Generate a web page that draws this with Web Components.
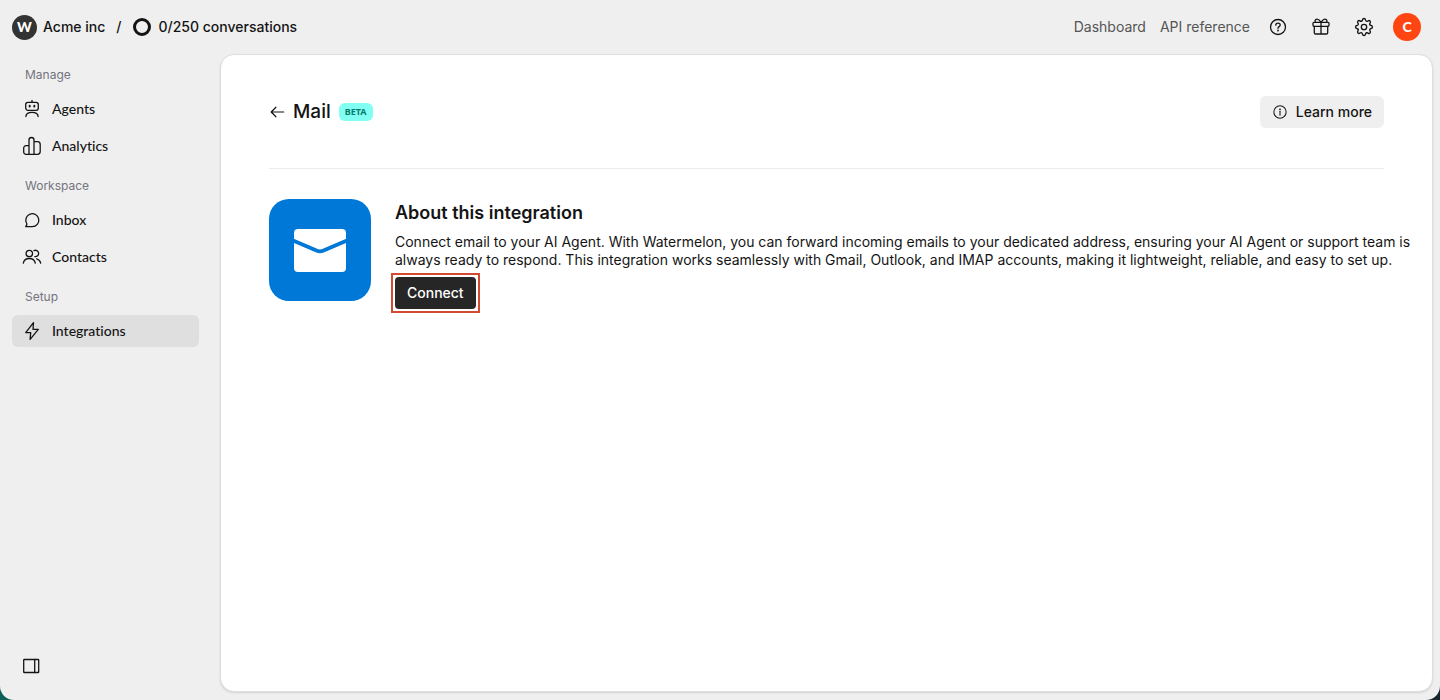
<!DOCTYPE html>
<html lang="en">
<head>
<meta charset="utf-8">
<meta name="viewport" content="width=device-width, initial-scale=1">
<title>Mail</title>
<style>
    html, body{
        margin: 0;
        min-height: 100%;
    }
    body{
        background: linear-gradient(90deg, #0a6156 0%, #16262c 100%);
        color: #141414;
        font: 500 14px/18px Inter, "Liberation Sans", sans-serif;
    }
</style>
</head>
<body>
<app-shell>
    <top-bar slot="header" workspace="Acme inc" usage="0/250 conversations"></top-bar>
    <side-nav slot="sidebar">
        <nav-group label="Manage">
            <nav-item icon="agent">Agents</nav-item>
            <nav-item icon="chart">Analytics</nav-item>
        </nav-group>
        <nav-group label="Workspace">
            <nav-item icon="chat">Inbox</nav-item>
            <nav-item icon="people">Contacts</nav-item>
        </nav-group>
        <nav-group label="Setup">
            <nav-item icon="bolt" active>Integrations</nav-item>
        </nav-group>
    </side-nav>
    <page-header>
        Mail
        <span slot="badge">BETA</span>
        <span slot="action">Learn more</span>
    </page-header>
    <integration-info>
        <span slot="title">About this integration</span>
        Connect email to your AI Agent. With Watermelon, you can forward incoming emails to your dedicated address, ensuring your AI Agent or support team is always ready to respond. This integration works seamlessly with Gmail, Outlook, and IMAP accounts, making it lightweight, reliable, and easy to set up.
        <span slot="action">Connect</span>
    </integration-info>
</app-shell>

<script>
// a quarter of the gear outline, repeated four times around the centre
const gearQuarter = "M-2.4-5.8Q-1.6-6.2-1.5-7.1-1.3-8.5 0-8.5 1.3-8.5 1.5-7.1 1.6-6.2 2.4-5.8 3.2-5.5 4-6.1 5.1-6.9 6-6 6.9-5.1 6.1-4 5.500-3.200 5.800-2.400";

const icons = {
  agent: `<rect x="3.7" y="3.3" width="12.6" height="8" rx="2.2"/><path d="M10 1.4v1.900M3.900 17.600c0-2.600 2.400-4.300 6.100-4.300s6.100 1.700 6.100 4.300"/><path d="M7.700 6.800v.6M12.300 6.800v.6" stroke-width="2"/>`,
  chart: `<path d="M7 18.300H4A2.300 2.300 0 0 1 1.700 16v-4A2.300 2.300 0 0 1 4 9.700h3M7 18.300V4a2.500 2.500 0 0 1 5 0v14.300zM12 5.700h3.500A2.700 2.700 0 0 1 18.200 8.400V15.600a2.700 2.700 0 0 1-2.700 2.700H12"/>`,
  chat: `<path d="M3.700 16.700h6.600a6.500 6.500 0 1 0-5.600-3.200c.3.600.2 1.100-.1 1.700z"/>`,
  people: `<circle cx="7.300" cy="6.500" r="3.200"/><path d="M1.300 16.200c.6-3 3-4.700 6-4.700s5.400 1.700 6 4.700M12 3.600a3.200 3.200 0 1 1 .8 6M14.600 11.800c2.100.5 3.600 2 4.100 4.400"/>`,
  bolt: `<path d="M11.500 1.700 3.700 11.600h5L8.100 18.300l8.200-10h-5.300z"/>`,
  help: `<circle cx="10" cy="10" r="7.500"/><path d="M7.800 8.200c0-1.300 1-2.100 2.200-2.100s2.200.8 2.200 2c0 1.500-2.200 1.600-2.200 3.200"/><circle cx="10" cy="13.500" r=".9" fill="currentColor" stroke="none"/>`,
  gift: `<rect x="2" y="5.300" width="16" height="4" rx="1"/><path d="M3.300 9.300v6.400a1.300 1.300 0 0 0 1.300 1.300h10.800a1.300 1.300 0 0 0 1.300-1.300V9.300M10 5.300V17M10 5.300C8.900 3.400 7.600 2 6 2.100 4 2.200 3.600 4 4.600 5.300M10 5.300c1.100-1.900 2.400-3.300 4-3.200 2 .1 2.400 1.900 1.400 3.200"/>`,
  gear: `<circle cx="10" cy="10" r="2.700"/>` + [0, 90, 180, 270].map((angle) => `<path d="${gearQuarter}" transform="translate(10 10) rotate(${angle})"/>`).join(""),
  back: `<path d="M2.400 10h14M7.700 4.700 2.400 10l5.300 5.300"/>`,
  info: `<circle cx="10" cy="10" r="7.700"/><path d="M10 9v5"/><circle cx="10" cy="6.600" r="1.100" fill="currentColor" stroke="none"/>`,
  panel: `<rect x="1.700" y="3.500" width="15" height="13" rx=".6"/><path d="M12.700 3.500v13"/>`,
};

class Icon extends HTMLElement {
  constructor() {
    super();
    const shadow = this.attachShadow({ mode: "open" });
    shadow.innerHTML = `
      <style>
        :host{
            display: inline-block;
            flex: none;
            width: 20px;
            height: 20px;
        }
        svg{
            display: block;
            width: 100%;
            height: 100%;
        }
      </style>
      <svg viewBox="0 0 20 20" fill="none" stroke="currentColor" stroke-width="1.3" stroke-linecap="round" stroke-linejoin="round" aria-hidden="true">${icons[this.getAttribute("name")]}</svg>
    `;
  }
}

class AppShell extends HTMLElement {
  constructor() {
    super();
    const shadow = this.attachShadow({ mode: "open" });
    shadow.innerHTML = `
      <style>
        :host{
            display: grid;
            grid-template: 54px 1fr / 220px minmax(0, 1fr);
            box-sizing: border-box;
            min-height: 100vh;
            padding: 0 7px 8px 0;
            background: #efefef;
            border-radius: 0 0 14px 14px;
        }
        .header{
            grid-column: 1 / -1;
        }
        .sidebar{
            display: grid;
        }
        main{
            padding: 41px 48px;
            background: #fff;
            border: 1px solid #dedede;
            border-radius: 14px;
            box-shadow: 0 1px 2px rgba(0, 0, 0, 0.12);
        }
      </style>
      <div class="header"><slot name="header"></slot></div>
      <div class="sidebar"><slot name="sidebar"></slot></div>
      <main><slot></slot></main>
    `;
  }
}

class TopBar extends HTMLElement {
  constructor() {
    super();
    const shadow = this.attachShadow({ mode: "open" });
    shadow.innerHTML = `
      <style>
        :host{
            display: flex;
            align-items: center;
            justify-content: space-between;
            height: 54px;
            padding: 0 12px;
        }
        div, nav{
            display: flex;
            align-items: center;
        }
        .logo{
            display: flex;
            align-items: center;
            justify-content: center;
            width: 25px;
            height: 25px;
            margin-right: 6px;
            border-radius: 50%;
            background: #333;
            color: #fff;
            font-family: Lato, sans-serif;
            font-weight: 900;
        }
        .slash{
            margin: 0 11px;
        }
        .ring{
            box-sizing: border-box;
            width: 18px;
            height: 18px;
            margin-right: 8px;
            border: 3px solid #141414;
            border-radius: 50%;
        }
        nav{
            gap: 14px;
        }
        a{
            color: #555;
            font-weight: 400;
            text-decoration: none;
        }
        .tools{
            gap: 23px;
            margin-left: 4px;
        }
        button{
            display: flex;
            padding: 0;
            border: 0;
            background: none;
            color: inherit;
            font: inherit;
            cursor: pointer;
        }
        .avatar{
            align-items: center;
            justify-content: center;
            width: 28px;
            height: 28px;
            margin-left: -4px;
            border-radius: 50%;
            background: #ff4612;
            color: #fff;
            font-family: Lato, sans-serif;
            font-weight: 900;
        }
      </style>
      <div>
        <span class="logo">W</span>
        <span class="workspace"></span>
        <span class="slash">/</span>
        <span class="ring"></span>
        <span class="usage"></span>
      </div>
      <nav>
        <a href="#dashboard">Dashboard</a>
        <a href="#api">API reference</a>
        <div class="tools">
          <button aria-label="Help"><c-icon name="help"></c-icon></button>
          <button aria-label="News"><c-icon name="gift"></c-icon></button>
          <button aria-label="Settings"><c-icon name="gear"></c-icon></button>
          <button class="avatar">C</button>
        </div>
      </nav>
    `;
    shadow.querySelector(".workspace").textContent = this.getAttribute("workspace");
    shadow.querySelector(".usage").textContent = this.getAttribute("usage");
  }
}

class SideNav extends HTMLElement {
  constructor() {
    super();
    const shadow = this.attachShadow({ mode: "open" });
    shadow.innerHTML = `
      <style>
        :host{
            display: flex;
            flex-direction: column;
            justify-content: space-between;
            padding: 5px 21px 16px 12px;
        }
        nav{
            display: grid;
            gap: 8px;
        }
        button{
            display: flex;
            align-self: start;
            padding: 0;
            margin-left: 10px;
            border: 0;
            background: none;
            color: inherit;
        }
      </style>
      <nav><slot></slot></nav>
      <button aria-label="Toggle sidebar"><c-icon name="panel"></c-icon></button>
    `;
  }
}

class NavGroup extends HTMLElement {
  constructor() {
    super();
    const shadow = this.attachShadow({ mode: "open" });
    shadow.innerHTML = `
      <style>
        :host{
            display: block;
        }
        .label{
            padding: 0 0 2px 13px;
            color: #747480;
            font-size: 12px;
            font-weight: 400;
            line-height: 32px;
        }
        .items{
            display: grid;
            gap: 5px;
        }
      </style>
      <div class="label"></div>
      <div class="items"><slot></slot></div>
    `;
    shadow.querySelector(".label").textContent = this.getAttribute("label");
  }
}

class NavItem extends HTMLElement {
  constructor() {
    super();
    const shadow = this.attachShadow({ mode: "open" });
    shadow.innerHTML = `
      <style>
        :host{
            display: block;
        }
        a{
            display: flex;
            align-items: center;
            gap: 10px;
            height: 32px;
            padding: 0 10px;
            border-radius: 6px;
            color: inherit;
            font: 500 14px/20px Lato, sans-serif;
            font-variant-ligatures: none;
            text-decoration: none;
        }
        :host([active]) a{
            background: #dfdfdf;
        }
      </style>
      <a href="#"><c-icon name="${this.getAttribute("icon")}"></c-icon><slot></slot></a>
    `;
    if (this.hasAttribute("active")) {
      shadow.querySelector("a").setAttribute("aria-current", "page");
    }
  }
}

class PageHeader extends HTMLElement {
  constructor() {
    super();
    const shadow = this.attachShadow({ mode: "open" });
    shadow.innerHTML = `
      <style>
        :host{
            display: flex;
            align-items: center;
            padding-bottom: 40px;
            border-bottom: 1px solid #ececec;
        }
        .back{
            display: flex;
            margin-right: 6px;
            color: inherit;
        }
        .back c-icon{
            width: 18px;
            height: 18px;
        }
        h1{
            margin: 0;
            font-size: 19px;
            font-weight: 500;
            line-height: 24px;
        }
        .badge{
            margin-left: 8px;
            padding: 0 6px;
            border-radius: 6px;
            background: #80fff2;
            color: #087a6e;
            font: 700 9px/18px "Noto Sans", sans-serif;
        }
        button{
            display: flex;
            align-items: center;
            gap: 8px;
            height: 32px;
            margin-left: auto;
            padding: 0 12px;
            border: 0;
            border-radius: 6px;
            background: #efefef;
            color: inherit;
            font: inherit;
        }
        button c-icon{
            width: 16px;
            height: 16px;
        }
      </style>
      <a class="back" href="#integrations" aria-label="Back"><c-icon name="back"></c-icon></a>
      <h1><slot></slot></h1>
      <span class="badge"><slot name="badge"></slot></span>
      <button><c-icon name="info"></c-icon><slot name="action"></slot></button>
    `;
  }
}

class IntegrationInfo extends HTMLElement {
  constructor() {
    super();
    const shadow = this.attachShadow({ mode: "open" });
    shadow.innerHTML = `
      <style>
        :host{
            display: flex;
            align-items: flex-start;
            gap: 24px;
            padding-top: 30px;
        }
        svg{
            flex: none;
            width: 102px;
            height: 102px;
        }
        h2{
            margin: 2px 0 8px;
            font-size: 18px;
            font-weight: 600;
            line-height: 24px;
        }
        p{
            margin: 0 -32px 0 0;
            font-weight: 400;
        }
        .frame{
            display: inline-block;
            margin: 4px 0 0 -4px;
            padding: 2px;
            border: 2px solid #d34a32;
        }
        button{
            display: block;
            height: 32px;
            padding: 0 12px;
            border: 0;
            border-radius: 4px;
            background: #262626;
            color: #fff;
            font: inherit;
        }
      </style>
      <svg viewBox="0 0 102 102" aria-hidden="true">
        <rect width="102" height="102" rx="20" fill="#0078d8"/>
        <rect x="25" y="30" width="52" height="43" rx="4" fill="#fff"/>
        <path d="M24 41.500 48 51.800Q51 53 54 51.800L78 41.500" fill="none" stroke="#0078d8" stroke-width="3.800"/>
      </svg>
      <div>
        <h2><slot name="title"></slot></h2>
        <p><slot></slot></p>
        <span class="frame"><button><slot name="action"></slot></button></span>
      </div>
    `;
  }
}

customElements.define("c-icon", Icon);
customElements.define("app-shell", AppShell);
customElements.define("top-bar", TopBar);
customElements.define("side-nav", SideNav);
customElements.define("nav-group", NavGroup);
customElements.define("nav-item", NavItem);
customElements.define("page-header", PageHeader);
customElements.define("integration-info", IntegrationInfo);
</script>
</body>
</html>
